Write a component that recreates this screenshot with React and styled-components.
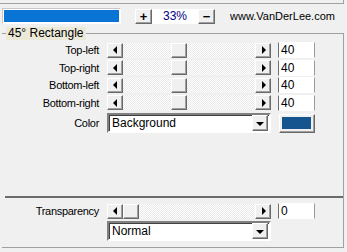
import React from 'react'
import styled, { createGlobalStyle } from 'styled-components'

const GlobalStyle = createGlobalStyle`
  html, body {
    margin: 0;
    padding: 0;
    background: #f0f0f0;
  }
  body {
    width: 347px;
    height: 252px;
    overflow: hidden;
    font-family: "Liberation Sans", Arial, sans-serif;
    font-size: 11px;
    color: #000;
  }
`

const Page = styled.div`
  width: 347px;
  height: 252px;
  display: flex;
  flex-direction: column;
`

const TopEdge = styled.div`
  width: 343px;
  height: 3px;
  border-bottom: 1px solid #a0a0a0;
  border-right: 1px solid #a0a0a0;
`

const Toolbar = styled.div`
  display: flex;
  align-items: center;
  height: 22px;
  padding: 1px 0 0 2px;
`

const Progress = styled.div`
  box-sizing: border-box;
  width: 119px;
  height: 16px;
  padding: 1px;
  background: #fff;
  border: 1px solid #fff;
  border-top-color: #c8c8c8;
  border-left-color: #c8c8c8;
`

const ProgressFill = styled.div`
  height: 100%;
  background: #0a74d6;
`

const raised = `
  box-sizing: border-box;
  background: #f0f0f0;
  border: 1px solid;
  border-color: #fff #696969 #696969 #fff;
  box-shadow: inset -1px -1px #a0a0a0;
`

const ZoomButton = styled.div`
  ${raised}
  width: 17px;
  height: 15px;
  margin-left: ${p => p.$gap || 0}px;
  display: flex;
  align-items: center;
  justify-content: center;
  font-size: 13px;
  font-weight: bold;
  line-height: 1;
`

const Percent = styled.div`
  width: 46px;
  height: 15px;
  background: #fff;
  color: #000080;
  font-size: 12px;
  line-height: 15px;
  text-align: center;
`

const Url = styled.div`
  margin-left: 15px;
  font-size: 11px;
`

const Group = styled.fieldset`
  box-sizing: border-box;
  width: 342px;
  height: 221px;
  margin: 0 0 0 2px;
  padding: 0;
  border: 1px solid #a0a0a0;
  border-left: none;
  min-inline-size: 0;
`

const Legend = styled.legend`
  margin-left: 4px;
  padding: 0 2px;
  background: #ece9d8;
  font-size: 12px;
  line-height: 13px;
`

const Inner = styled.div`
  height: 207px;
  display: flex;
  flex-direction: column;
  padding-bottom: 6px;
  box-sizing: border-box;
`

const Rows = styled.div`
  display: flex;
  flex-direction: column;
  gap: 1.5px;
  margin-top: ${p => p.$top || 0}px;
`

const Row = styled.div`
  display: flex;
  align-items: center;
  height: ${p => p.$h || 16}px;
  margin-top: ${p => p.$top || 0}px;
`

const Label = styled.div`
  width: 97px;
  margin-right: 8px;
  text-align: right;
  letter-spacing: -0.3px;
  white-space: nowrap;
`

const Scrollbar = styled.div`
  display: flex;
  width: 164px;
  height: 15px;
`

const ArrowButton = styled.div`
  ${raised}
  width: 16px;
  height: 15px;
  display: flex;
  align-items: center;
  justify-content: center;

  &::after {
    content: '';
    border-top: 4px solid transparent;
    border-bottom: 4px solid transparent;
    ${p => p.$dir === 'left'
      ? 'border-right: 4px solid #000; margin-right: 1px;'
      : 'border-left: 4px solid #000; margin-left: 1px;'}
  }
`

const Track = styled.div`
  flex: 1;
  display: flex;
  background: repeating-conic-gradient(#fff 0 25%, #e9e9e9 0 50%) 0 0 / 2px 2px;
`

const Thumb = styled.div`
  ${raised}
  width: 16px;
  height: 15px;
  margin-left: ${p => p.$offset}px;
`

const ValueBox = styled.div`
  box-sizing: border-box;
  width: 37px;
  height: 16px;
  margin-left: 7px;
  padding-left: 2px;
  background: #fff;
  border: 1px solid #fff;
  border-left-color: #6f6f6f;
  border-right-color: #9a9a9a;
  font-size: 12px;
  line-height: 14px;
`

const Select = styled.div`
  box-sizing: border-box;
  display: flex;
  align-items: center;
  width: 164px;
  height: 20px;
  background: #fff;
  border: 2px solid;
  border-color: #808080 #fff #fff #808080;
  box-shadow: inset 1px 1px #404040;
  padding: 1px 1px 1px 3px;
  font-size: 12px;
`

const SelectText = styled.div`
  flex: 1;
`

const DropButton = styled.div`
  ${raised}
  width: 16px;
  height: 16px;
  display: flex;
  align-items: center;
  justify-content: center;

  &::after {
    content: '';
    border-left: 4px solid transparent;
    border-right: 4px solid transparent;
    border-top: 4px solid #000;
    margin-top: 1px;
  }
`

const Swatch = styled.div`
  ${raised}
  width: 36px;
  height: 19px;
  margin-left: 8px;
  padding: 2px 3px 3px 2px;
`

const SwatchFill = styled.div`
  width: 100%;
  height: 100%;
  background: ${p => p.$color};
`

const Spacer = styled.div`
  flex: 1;
`

const Separator = styled.div`
  height: 2px;
  margin: 0 0 5px 3px;
  background: #6b6b6b;
`

const SubRow = styled.div`
  display: flex;
  margin: 2px 0 0 105px;
`

const SliderRow = ({ label, value }) => (
  <Row>
    <Label>{label}</Label>
    <Scrollbar>
      <ArrowButton $dir="left" />
      <Track>
        <Thumb $offset={Math.round(value / 100 * 120)} />
      </Track>
      <ArrowButton $dir="right" />
    </Scrollbar>
    <ValueBox>{value}</ValueBox>
  </Row>
)

const corners = ['Top-left', 'Top-right', 'Bottom-left', 'Bottom-right']

const App = () => {
  return (
    <Page>
      <GlobalStyle />
      <TopEdge />
      <Toolbar>
        <Progress>
          <ProgressFill />
        </Progress>
        <ZoomButton $gap={14}>+</ZoomButton>
        <Percent>33%</Percent>
        <ZoomButton>−</ZoomButton>
        <Url>www.VanDerLee.com</Url>
      </Toolbar>

      <Group>
        <Legend>45° Rectangle</Legend>
        <Inner>
          <Rows $top={2}>
            {corners.map(c => <SliderRow key={c} label={c} value={40} />)}
            <Row $h={20} $top={1}>
              <Label>Color</Label>
              <Select>
                <SelectText>Background</SelectText>
                <DropButton />
              </Select>
              <Swatch>
                <SwatchFill $color="#14558f" />
              </Swatch>
            </Row>
          </Rows>
          <Spacer />
          <Separator />
          <SliderRow label="Transparency" value={0} />
          <SubRow>
            <Select>
              <SelectText>Normal</SelectText>
              <DropButton />
            </Select>
          </SubRow>
        </Inner>
      </Group>
    </Page>
  )
}

export default App
